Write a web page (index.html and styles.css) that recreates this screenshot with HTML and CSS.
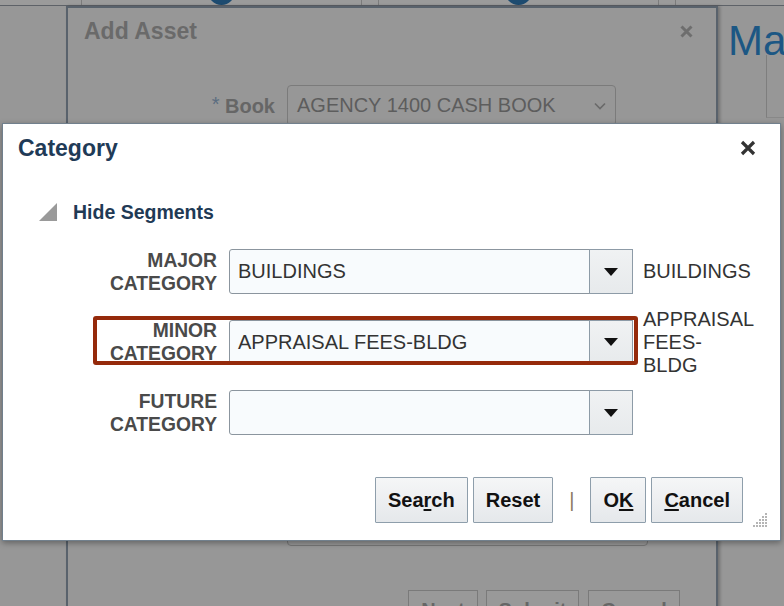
FILE: index.html
```html
<!DOCTYPE html>
<html>
<head>
<meta charset="utf-8">
<link rel="stylesheet" href="styles.css">
</head>
<body>
<div class="page">
  <div class="train">
    <div class="train-cell w82"></div>
    <div class="train-cell w280"><span class="stop"></span></div>
    <div class="train-cell w17"></div>
    <div class="train-cell w280"><span class="stop"></span></div>
    <div class="train-cell w17"></div>
    <div class="train-cell rest"></div>
  </div>
  <h1 class="page-title">Ma</h1>
  <div class="page-panel"></div>
</div>

<div class="dlg-asset">
  <div class="asset-head">
    <span class="asset-title">Add Asset</span>
    <svg class="asset-close" width="13" height="13" viewBox="0 0 13 13"><path d="M1.5 1.5L11.5 11.5M11.5 1.5L1.5 11.5" stroke="#6e6e6e" stroke-width="3" fill="none"/></svg>
  </div>
  <div class="book-row">
    <label class="book-label"><span class="req">*</span> Book</label>
    <div class="book-select">
      <span>AGENCY 1400 CASH BOOK</span>
      <svg width="12" height="8" viewBox="0 0 12 8"><path d="M1 1.5L6 6.5L11 1.5" stroke="#6a6a6a" stroke-width="1.6" fill="none"/></svg>
    </div>
  </div>
  <div class="notes"></div>
  <div class="asset-foot">
    <span class="bg-btn w70">Next</span>
    <span class="bg-btn w93">Submit</span>
    <span class="bg-btn w92">Cancel</span>
  </div>
</div>

<div class="dlg-cat">
  <div class="cat-head">
    <span class="cat-title">Category</span>
    <svg class="cat-close" width="16" height="16" viewBox="0 0 16 16"><path d="M2 2L14 14M14 2L2 14" stroke="#333" stroke-width="3.2" fill="none"/></svg>
  </div>
  <div class="segments">
    <svg width="18" height="18" viewBox="0 0 18 18"><polygon points="0,18 18,18 18,0" fill="#9a9a9a"/></svg>
    <span class="seg-text">Hide Segments</span>
  </div>
  <div class="rows">
    <div class="row">
      <div class="label">MAJOR CATEGORY</div>
      <div class="field">
        <div class="input">BUILDINGS</div>
        <div class="drop"><svg width="14" height="8" viewBox="0 0 14 8"><polygon points="0,0 14,0 7,8" fill="#111"/></svg></div>
      </div>
      <div class="desc">BUILDINGS</div>
    </div>
    <div class="row">
      <div class="label">MINOR CATEGORY</div>
      <div class="field">
        <div class="input">APPRAISAL FEES-BLDG</div>
        <div class="drop"><svg width="14" height="8" viewBox="0 0 14 8"><polygon points="0,0 14,0 7,8" fill="#111"/></svg></div>
      </div>
      <div class="desc">APPRAISAL<br>FEES-<br>BLDG</div>
      <div class="highlight"></div>
    </div>
    <div class="row">
      <div class="label">FUTURE CATEGORY</div>
      <div class="field">
        <div class="input"></div>
        <div class="drop"><svg width="14" height="8" viewBox="0 0 14 8"><polygon points="0,0 14,0 7,8" fill="#111"/></svg></div>
      </div>
      <div class="desc"></div>
    </div>
  </div>
  <div class="actions">
    <button class="btn">Sea<u>r</u>ch</button>
    <button class="btn">Reset</button>
    <span class="sep">|</span>
    <button class="btn">O<u>K</u></button>
    <button class="btn"><u>C</u>ancel</button>
  </div>
  <svg class="grip" width="16" height="16" viewBox="0 0 16 16">
    <g fill="#b5b5b5">
      <rect x="13" y="1" width="2" height="2"/>
      <rect x="10" y="4" width="2" height="2"/><rect x="13" y="4" width="2" height="2"/>
      <rect x="7" y="7" width="2" height="2"/><rect x="10" y="7" width="2" height="2"/><rect x="13" y="7" width="2" height="2"/>
      <rect x="4" y="10" width="2" height="2"/><rect x="7" y="10" width="2" height="2"/><rect x="10" y="10" width="2" height="2"/><rect x="13" y="10" width="2" height="2"/>
      <rect x="1" y="13" width="2" height="2"/><rect x="4" y="13" width="2" height="2"/><rect x="7" y="13" width="2" height="2"/><rect x="10" y="13" width="2" height="2"/><rect x="13" y="13" width="2" height="2"/>
    </g>
  </svg>
</div>
</body>
</html>
```
FILE: styles.css
```css
* { box-sizing: border-box; }
html, body {
  margin: 0;
  padding: 0;
  width: 784px;
  height: 606px;
  overflow: hidden;
  background: #979797;
  font-family: "Liberation Sans", Arial, sans-serif;
}
.page { position: relative; }

.train {
  display: flex;
  height: 6px;
  overflow: hidden;
  background: #9b9b9b;
  border-bottom: 1px solid #5e6268;
}
.train-cell {
  display: flex;
  justify-content: center;
  align-items: flex-end;
  border-right: 1px solid #7c7c7c;
  height: 5px;
}
.w82 { width: 82px; }
.w280 { width: 280px; }
.w17 { width: 17px; }
.rest { flex: 1; border-right: none; }
.stop {
  flex: none;
  width: 27px;
  height: 27px;
  border-radius: 50%;
  background: #1d4b70;
}

.page-title {
  margin: 18px 0 0 728px;
  font-size: 42px;
  line-height: 34px;
  height: 34px;
  font-weight: normal;
  color: #1c5784;
  white-space: nowrap;
}
.page-panel {
  margin: -3px 0 0 766px;
  height: 63px;
  border-left: 1px solid #7e7e7e;
  border-bottom: 1px solid #888;
}

/* Background dialog */
.dlg-asset {
  position: absolute;
  left: 66px;
  top: 6px;
  width: 652px;
  height: 640px;
  border: 2px solid #59626c;
  background: #979797;
  box-shadow: 2px 0 3px rgba(0,0,0,0.25);
}
.asset-head {
  display: flex;
  justify-content: space-between;
  align-items: center;
  padding: 9px 23px 0 16px;
  height: 37px;
}
.asset-title {
  font-size: 23px;
  line-height: 28px;
  font-weight: bold;
  color: #6a6a6a;
}
.book-row {
  display: flex;
  align-items: center;
  margin-top: 40px;
  height: 41px;
}
.book-label {
  width: 207px;
  margin-right: 12px;
  text-align: right;
  font-size: 20px;
  font-weight: bold;
  color: #666;
}
.req {
  font-weight: normal;
  color: #5b6d80;
  vertical-align: 2px;
}
.book-select {
  width: 329px;
  height: 41px;
  border: 1px solid #7b7b7b;
  border-radius: 4px;
  padding: 0 9px 0 9px;
  display: flex;
  align-items: center;
  justify-content: space-between;
  font-size: 20px;
  color: #5d5d5d;
}
.notes {
  margin: 354px 0 0 219px;
  width: 361px;
  height: 66px;
  border: 1px solid #767676;
  border-radius: 4px;
}
.asset-foot {
  display: flex;
  margin: 44px 0 0 340px;
}
.bg-btn {
  height: 44px;
  border: 1px solid #7a7a7a;
  background: #999;
  font-size: 20px;
  font-weight: bold;
  color: #666;
  line-height: 38px;
  text-align: center;
  margin-right: 8px;
}
.w70 { width: 70px; }
.w93 { width: 93px; margin-right: 9px; }
.w92 { width: 92px; }

/* Category dialog */
.dlg-cat {
  position: absolute;
  left: 2px;
  top: 123px;
  width: 779px;
  height: 418px;
  background: #fff;
  border: 1px solid #71808d;
  box-shadow: 0 2px 6px rgba(0,0,0,0.35);
}
.cat-head {
  display: flex;
  justify-content: space-between;
  align-items: center;
  padding: 10px 24px 0 15px;
  height: 38px;
}
.cat-title {
  font-size: 23px;
  line-height: 28px;
  font-weight: bold;
  color: #1f3b57;
}
.segments {
  display: flex;
  align-items: center;
  gap: 16px;
  margin-top: 38px;
  padding-left: 36px;
  height: 24px;
}
.seg-text {
  font-size: 19.5px;
  font-weight: bold;
  color: #1f3a55;
  line-height: 24px;
}
.rows {
  display: flex;
  flex-direction: column;
  gap: 25.5px;
  margin-top: 25px;
  padding-left: 94px;
}
.row {
  position: relative;
  display: flex;
  align-items: center;
  height: 45px;
}
.label {
  width: 120px;
  margin-right: 12px;
  text-align: right;
  font-size: 19.3px;
  line-height: 23px;
  font-weight: bold;
  color: #4a4a4a;
}
.field {
  display: flex;
  height: 45px;
}
.input {
  width: 361px;
  height: 45px;
  border: 1px solid #8b959e;
  border-radius: 3px 0 0 3px;
  background: #f8fbfd;
  padding-left: 8px;
  font-size: 20px;
  line-height: 43px;
  color: #333;
  white-space: nowrap;
}
.drop {
  width: 44px;
  height: 45px;
  margin-left: -1px;
  border: 1px solid #8d9ba7;
  background: linear-gradient(#f0f2f3, #e7eaec);
  display: flex;
  align-items: center;
  justify-content: center;
}
.desc {
  margin-left: 10px;
  width: 125px;
  font-size: 20px;
  line-height: 23px;
  color: #333;
  white-space: nowrap;
}
.highlight {
  position: absolute;
  left: -4px;
  top: -4px;
  width: 545px;
  height: 49px;
  border: 4px solid #952a0b;
  border-radius: 3px;
}
.actions {
  display: flex;
  justify-content: flex-end;
  align-items: center;
  gap: 5px;
  margin-top: 42px;
  padding-right: 37px;
}
.btn {
  height: 46px;
  padding: 0 12px;
  border: 1px solid #8e9eab;
  border-radius: 1px;
  background: linear-gradient(#f5f6f7, #e5e8eb);
  font-family: "Liberation Sans", Arial, sans-serif;
  font-size: 20px;
  font-weight: bold;
  color: #111;
}
.btn u { text-underline-offset: 2px; }
.sep {
  margin: 0 11px;
  font-size: 20px;
  color: #8c7a64;
}
.grip {
  position: absolute;
  right: 12px;
  bottom: 12px;
}
```
